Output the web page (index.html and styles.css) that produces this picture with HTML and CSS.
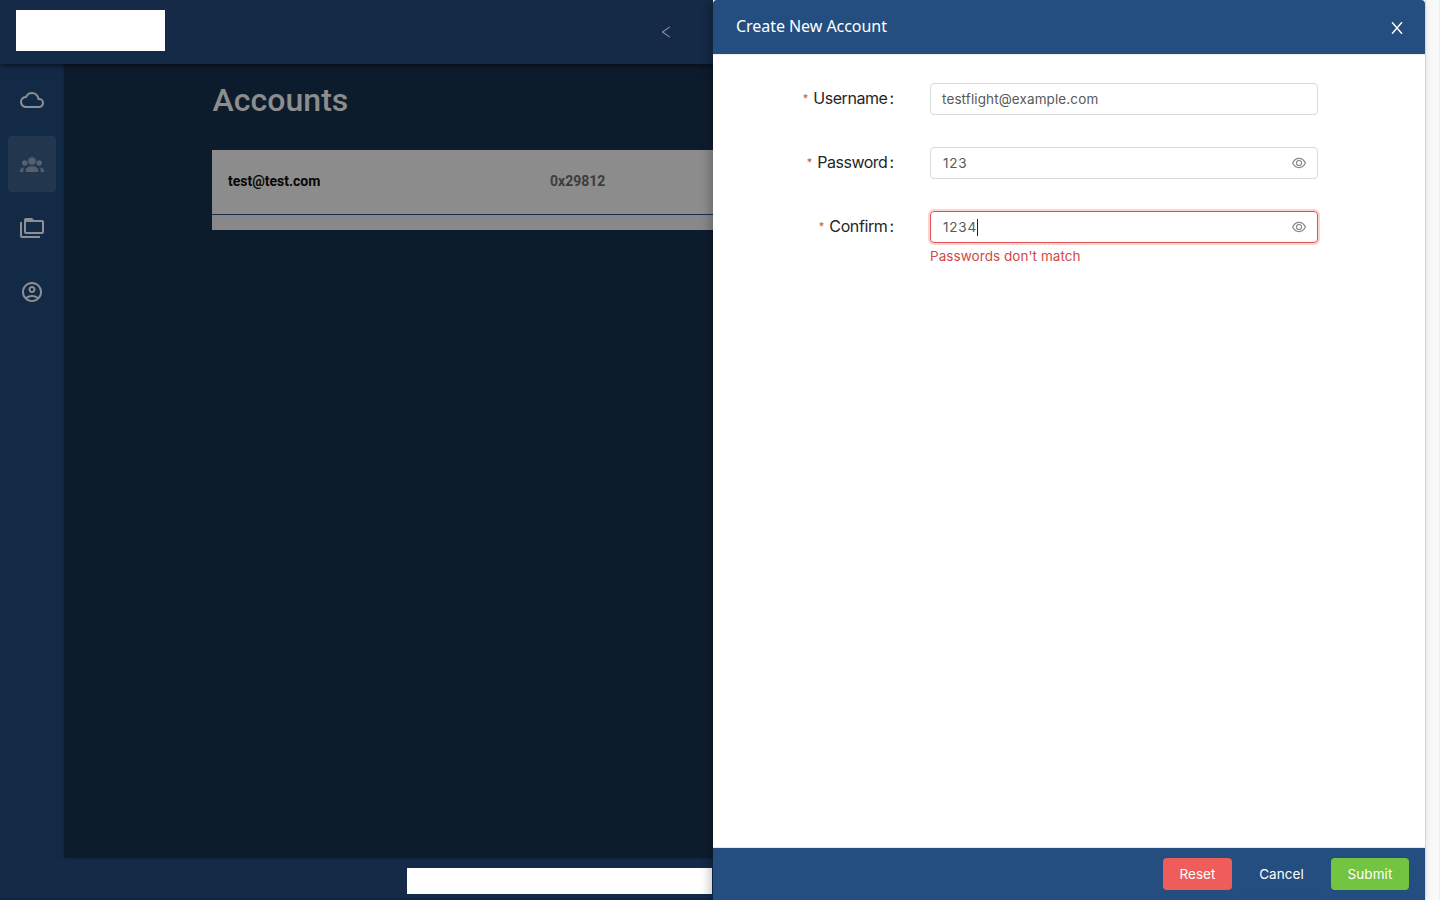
FILE: index.html
```html
<!DOCTYPE html>
<html lang="en">
<head>
<meta charset="utf-8">
<title>Accounts</title>
<link rel="stylesheet" href="styles.css">
</head>
<body>
<div class="app">
  <header class="topbar">
    <div class="logo"></div>
    <svg class="chevron" width="10" height="12" viewBox="0 0 10 12"><path d="M8.800 .9 1.500 6l7.300 5.100"/></svg>
  </header>
  <div class="middle">
    <nav class="sidebar">
      <a class="nav-item"><svg width="24" height="24" viewBox="0 0 24 24"><path d="M19.350 10.040A7.490 7.490 0 0 0 12 4C9.110 4 6.600 5.640 5.350 8.040A5.994 5.994 0 0 0 0 14c0 3.310 2.690 6 6 6h13c2.760 0 5-2.240 5-5 0-2.640-2.050-4.780-4.650-4.960zM19 18H6c-2.210 0-4-1.790-4-4 0-2.050 1.530-3.760 3.560-3.970l1.070-.11.5-.95A5.469 5.469 0 0 1 12 6c2.620 0 4.880 1.860 5.390 4.430l.3 1.500 1.530.11A2.980 2.980 0 0 1 22 15c0 1.650-1.350 3-3 3z"/></svg></a>
      <a class="nav-item active"><svg width="24" height="24" viewBox="0 0 24 24"><circle cx="12" cy="9" r="3.800"/><circle cx="4.800" cy="11" r="2.800"/><circle cx="19.200" cy="11" r="2.800"/><path d="M5.800 20v-1.700C5.800 15.800 8.500 14.300 12 14.300s6.200 1.500 6.200 4V20zM0 20v-1.300c0-1.800 1.500-2.900 4.300-3.200-.7.800-1 1.700-1 2.800V20zM24 20v-1.300c0-1.800-1.500-2.900-4.300-3.200.7.800 1 1.700 1 2.800V20z"/></svg></a>
      <a class="nav-item"><svg width="24" height="24" viewBox="0 0 24 24"><path d="M2 6H0v14c0 1.100.9 2 2 2h18v-2H2V6zm20-2h-8l-2-2H6c-1.100 0-1.990.9-1.990 2L4 16c0 1.100.9 2 2 2h16c1.100 0 2-.9 2-2V6c0-1.100-.9-2-2-2zm0 12H6V6h16v10z"/><path d="M6 3h6l2 2v1H5V4z"/></svg></a>
      <a class="nav-item"><svg width="24" height="24" viewBox="0 0 24 24"><path d="M12 2C6.480 2 2 6.480 2 12s4.480 10 10 10 10-4.480 10-10S17.520 2 12 2zM7.350 18.500C8.660 17.560 10.260 17 12 17s3.340.56 4.650 1.500C15.340 19.440 13.740 20 12 20s-3.340-.56-4.650-1.500zm10.790-1.380A9.947 9.947 0 0 0 12 15c-2.330 0-4.460.8-6.140 2.120A7.957 7.957 0 0 1 4 12c0-4.420 3.580-8 8-8s8 3.580 8 8c0 1.950-.7 3.730-1.860 5.120z"/><path d="M12 6c-1.930 0-3.500 1.570-3.500 3.500S10.070 13 12 13s3.500-1.570 3.500-3.500S13.930 6 12 6zm0 5c-.83 0-1.500-.67-1.500-1.500S11.170 8 12 8s1.500.67 1.500 1.500S12.830 11 12 11z"/></svg></a>
    </nav>
    <main class="content">
      <h1 class="page-title">Accounts</h1>
      <div class="table">
        <div class="row"><span class="email">test@test.com</span><span class="code">0x29812</span></div>
        <div class="table-end"></div>
      </div>
    </main>
  </div>
  <footer class="bottombar"><div class="footer-box"></div></footer>
</div>
<section class="drawer">
  <header class="drawer-header">
    <h2 class="drawer-title">Create New Account</h2>
    <svg class="close" width="12" height="12" viewBox="0 0 12 12"><path d="M1 .2 11 11.800M11 .2 1 11.800"/></svg>
  </header>
  <form class="form">
    <div class="field">
      <div class="label"><i class="star">*</i><span class="username">Username</span><b class="colon">:</b></div>
      <div class="input"><span class="address">testflight@example.com</span></div>
    </div>
    <div class="field">
      <div class="label"><i class="star">*</i><span class="password">Password</span><b class="colon">:</b></div>
      <div class="input secret"><span class="digits">123</span><svg class="eye" width="14" height="14" viewBox="0 0 14 14"><path d="M.6 7Q2.900 2.400 7 2.400T13.400 7Q11.100 11.600 7 11.600T.6 7Z"/><circle cx="7" cy="7" r="2.500"/></svg></div>
    </div>
    <div class="field">
      <div class="label"><i class="star">*</i><span class="confirm">Confirm</span><b class="colon">:</b></div>
      <div class="input secret error"><span class="digits">1234</span><i class="caret"></i><svg class="eye" width="14" height="14" viewBox="0 0 14 14"><path d="M.6 7Q2.900 2.400 7 2.400T13.400 7Q11.100 11.600 7 11.600T.6 7Z"/><circle cx="7" cy="7" r="2.500"/></svg></div>
      <div class="message">Passwords don't match</div>
    </div>
  </form>
  <footer class="drawer-footer">
    <div class="btn reset">Reset</div>
    <div class="btn cancel">Cancel</div>
    <div class="btn submit">Submit</div>
  </footer>
</section>
<div class="scroll-track"></div>
</body>
</html>
```

FILE: styles.css
```css
* { box-sizing: border-box; }
body { margin: 0; height: 900px; display: grid; grid-template-columns: 713px 712px 15px; overflow: hidden; background: #fff; font-family: Inter, sans-serif; }
.app { display: flex; flex-direction: column; height: 900px; background: #142a46; }
.topbar { height: 64px; flex: none; display: flex; align-items: center; justify-content: space-between; padding: 0 42px 0 16px; background: #152a46; box-shadow: 0 2px 6px rgba(0,0,0,.55); z-index: 1; }
.logo { width: 149px; height: 41px; margin-bottom: 3px; background: #fff; }
.chevron { fill: none; stroke: #8b929b; stroke-width: 1.1; }
.middle { display: flex; height: 794px; }
.sidebar { width: 64px; flex: none; padding: 8px; display: flex; flex-direction: column; gap: 8px; background: #132a47; }
.nav-item { height: 56px; display: flex; align-items: center; justify-content: center; border-radius: 4px; fill: #8d8f92; }
.nav-item.active { background: #22364e; fill: #536072; }
.content { flex: 1; padding-left: 148px; background: #0d1c2d; box-shadow: 0 0 2px #0d1c2d; font-family: Roboto, sans-serif; }
.page-title { margin: 0; height: 86px; padding: 16px 0 0 .5px; font-size: 32px; line-height: 40px; font-weight: 500; letter-spacing: .04px; color: #8d8d8d; }
.row { height: 65px; padding: 0 16px 2px; display: flex; align-items: center; background: #8c8c8c; border-bottom: 1px solid #18304d; font-size: 14px; font-weight: 700; }
.email { width: 322px; color: #070707; }
.code { color: #3c3c3c; }
.table-end { height: 15px; background: #888; }
.bottombar { height: 42px; padding: 10px 1px 0 0; display: flex; justify-content: flex-end; border-bottom: 2px solid #10253f; }
.footer-box { width: 305px; height: 26px; background: #fff; }
.drawer { display: flex; flex-direction: column; height: 900px; z-index: 2; background: #fff; box-shadow: -3px 0 10px rgba(0,0,0,.25); }
.drawer-header { height: 54px; flex: none; display: flex; justify-content: space-between; align-items: center; padding: 0 22px 0 23px; border-radius: 4px 4px 0 0; background: #244e7f; }
.drawer-title { margin: 0 0 2px; font: 400 16px/22px "Noto Sans", sans-serif; letter-spacing: -.05px; color: #fff; white-space: nowrap; }
.close { margin-top: 2px; fill: none; stroke: #fff; stroke-width: 1.4; }
.form { flex: 1; margin: 0; padding: 28px 107px 0 0; border-top: 1px solid #eee; border-bottom: 1px solid #e6e6e6; }
.field { display: grid; grid-template-columns: 182px 388px; column-gap: 35px; height: 64px; grid-template-rows: 32px 26px; }
.label { display: flex; align-items: center; justify-content: flex-end; padding: 0 1px 2px 0; font-size: 16px; color: #262626; }
.star { margin-right: 5px; font-size: 11px; line-height: 12px; color: #d5514e; font-style: normal; }
.username { letter-spacing: -.45px; }
.password { letter-spacing: -.5px; }
.confirm { letter-spacing: -.4px; }
.colon { margin-left: 2px; font-weight: 400; }
.input { height: 32px; display: flex; align-items: center; padding: 0 11px; border: 1px solid #d9d9d9; border-radius: 4px; font-size: 13.5px; color: #595959; }
.secret { padding-left: 12px; }
.address { margin-bottom: 1px; letter-spacing: .11px; }
.digits { margin-bottom: 1px; letter-spacing: .8px; }
.eye { margin-left: auto; fill: none; stroke: #858585; stroke-width: 1.15; }
.error { border-color: #db514f; box-shadow: 0 0 0 2px #fcd4d2; }
.caret { width: 1px; height: 17px; background: #222; }
.message { grid-column: 2; padding-top: 3px; font-size: 13.5px; line-height: 21px; letter-spacing: .06px; color: #d0494a; }
.drawer-footer { height: 52px; display: flex; align-items: center; justify-content: flex-end; padding-right: 16px; background: #244e7f; }
.btn { height: 32px; padding-bottom: 1px; border-radius: 4px; display: flex; align-items: center; justify-content: center; font-size: 13.5px; letter-spacing: .06px; color: #fff; }
.reset { width: 69px; margin-right: 10px; background: #ee5d59; }
.cancel { width: 79px; margin-right: 10px; box-shadow: 0 2px 0 rgba(0,0,0,.02); }
.submit { width: 78px; background: #73c440; }
.scroll-track { background: #fafafa; border-left: 1px solid #e4e4e4; border-right: 1px solid #eee; }
```
